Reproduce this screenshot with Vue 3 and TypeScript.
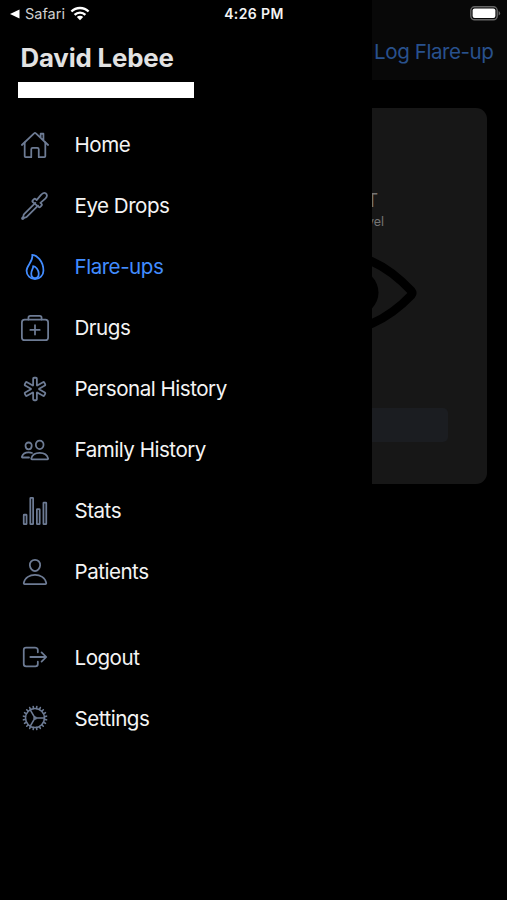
<script setup lang="ts">
interface MenuItem {
  label: string
  icon: string
  paths: string[]
  active?: boolean
}

const TEETH = 20
const gearTeeth = Array.from({ length: TEETH }, (_, i) => {
  const a = ((i + 0.5) * Math.PI * 2) / TEETH
  const point = (r: number) =>
    `${(256 + r * Math.cos(a)).toFixed(1)} ${(256 + r * Math.sin(a)).toFixed(1)}`
  return `M${point(166)}L${point(200)}`
}).join('')

const mainItems: MenuItem[] = [
  {
    label: 'Home',
    icon: 'home',
    paths: [
      'M80 212v236a16 16 0 0016 16h96V328a24 24 0 0124-24h80a24 24 0 0124 24v136h96a16 16 0 0016-16V212',
      'M480 256L266.89 52c-5-5.28-16.69-5.34-21.78 0L32 256M400 179V64h-48v69',
    ],
  },
  {
    label: 'Eye Drops',
    icon: 'dropper',
    paths: [
      'M262.5 204.2L70 396.7c-12.6 12.6-6.8 19.4-13 35.7-6.4 17-23.6 24.6-23.6 31.9 0 5.6 9.1 14.5 14.6 14.5 7.1 0 14.7-16.8 32-24.2 16.7-7.1 23-2 34.6-13.6L307.8 248.5',
      'M218 160l21-21c8-8 20-8 28 0l17 17 71-86c28-34 57-48 82-31 35 24 26 63-5 90l-84 73 19 19c8 8 8 20 0 28l-21 21c-8 8-20 8-28 0L218 188c-8-8-8-20 0-28z',
    ],
  },
  {
    label: 'Flare-ups',
    icon: 'flame',
    active: true,
    paths: [
      'M112 320c0-93 124-165 96-272 66 0 192 96 192 272a144 144 0 01-288 0z',
      'M320 368c0 57.71-32 80-64 80s-64-22.29-64-80 40-86 32-128c42 0 96 70.29 96 128z',
    ],
  },
  {
    label: 'Drugs',
    icon: 'medkit',
    paths: [
      'M80 112h352a48 48 0 0148 48v256a48 48 0 01-48 48H80a48 48 0 01-48-48V160a48 48 0 0148-48z',
      'M144 112V80a32 32 0 0132-32h160a32 32 0 0132 32v32M256 208v160M336 288H176',
    ],
  },
  {
    label: 'Personal History',
    icon: 'medical',
    paths: [
      'M429.93 174.27l-16.47-28.59a15.49 15.49 0 00-21.15-5.7l-98.39 57a4 4 0 01-6-3.5L288 80a16 16 0 00-16-16h-32a16 16 0 00-16 16l.07 113.57a4 4 0 01-6 3.5l-98.39-57a15.49 15.49 0 00-21.15 5.7l-16.46 28.5a15.42 15.42 0 005.69 21.1l98.49 57.08a4 4 0 010 6.9l-98.49 57.08a15.54 15.54 0 00-5.69 21.15l16.47 28.59a15.49 15.49 0 0021.15 5.7l98.39-57a4 4 0 016 3.5L224 432a16 16 0 0016 16h32a16 16 0 0016-16l-.07-113.57a4 4 0 016-3.5l98.39 57a15.49 15.49 0 0021.15-5.7l16.47-28.59a15.42 15.42 0 00-5.69-21.1l-98.49-57.08a4 4 0 010-6.9l98.49-57.08a15.51 15.51 0 005.68-21.21z',
    ],
  },
  {
    label: 'Family History',
    icon: 'people',
    paths: [
      'M402 168c-2.93 40.67-33.1 72-66 72s-63.12-31.32-66-72c-3-42.31 26.37-72 66-72s69 30.46 66 72z',
      'M336 304c-65.17 0-127.84 32.37-143.54 95.41-2.08 8.34 3.15 16.59 11.72 16.59h263.65c8.57 0 13.77-8.25 11.72-16.59C463.85 335.36 401.18 304 336 304z',
      'M200 185.94c-2.34 32.48-26.72 58.06-53 58.06s-50.7-25.57-53-58.06C91.61 152.15 115.34 128 147 128s55.39 24.77 53 57.94z',
      'M206 306c-18.05-8.27-37.93-11.45-59-11.45-52 0-102.1 25.85-114.65 76.2-1.65 6.66 2.53 13.25 9.37 13.25H154',
    ],
  },
  {
    label: 'Stats',
    icon: 'stats',
    paths: [
      'M72 320h32a8 8 0 018 8v144a8 8 0 01-8 8H72a8 8 0 01-8-8V328a8 8 0 018-8z',
      'M184 32h32a8 8 0 018 8v432a8 8 0 01-8 8h-32a8 8 0 01-8-8V40a8 8 0 018-8z',
      'M296 224h32a8 8 0 018 8v240a8 8 0 01-8 8h-32a8 8 0 01-8-8V232a8 8 0 018-8z',
      'M408 112h32a8 8 0 018 8v352a8 8 0 01-8 8h-32a8 8 0 01-8-8V120a8 8 0 018-8z',
    ],
  },
  {
    label: 'Patients',
    icon: 'person',
    paths: [
      'M344 144c-3.92 52.87-44 96-88 96s-84.15-43.12-88-96c-4-55 35-96 88-96s92 42 88 96z',
      'M256 304c-87 0-175.3 48-191.64 138.6C62.39 453.52 68.57 464 80 464h352c11.44 0 17.62-10.48 15.65-21.4C431.3 352 343 304 256 304z',
    ],
  },
]

const accountItems: MenuItem[] = [
  {
    label: 'Logout',
    icon: 'logout',
    paths: [
      'M304 336v40a40 40 0 01-40 40H104a40 40 0 01-40-40V136a40 40 0 0140-40h152c22.09 0 48 17.91 48 40v40M368 336l80-80-80-80M176 256h256',
    ],
  },
  {
    label: 'Settings',
    icon: 'settings',
    paths: [
      'M418 256a162 162 0 11-324 0 162 162 0 01324 0z',
      'M274 256a18 18 0 11-36 0 18 18 0 0136 0zM274 256h144M247 240L175 116M247 272L175 396',
      gearTeeth,
    ],
  },
]

const groups: MenuItem[][] = [mainItems, accountItems]
</script>

<template>
  <div class="screen">
    <div class="page">
      <header class="toolbar">
        <span class="action">Log Flare-up</span>
      </header>
      <main class="content">
        <section class="card">
          <div class="side">T</div>
          <div class="level">vel</div>
          <svg class="eye" viewBox="0 0 160 80" fill="none" stroke="#000" stroke-width="8.5" stroke-linejoin="round">
            <path d="M6 38C24 17 52 2 80 2c12 0 24 2 35 6.500C130 15 144 27 154.500 38q1.500 2 0 4C144 53 130 64 115 70.500 104 75 92 77 80 77 52 77 24 63 6 42q-1.500-2 0-4z" />
            <circle cx="99" cy="39.500" r="22.500" fill="#000" stroke="none" />
          </svg>
          <div class="button"></div>
        </section>
      </main>
    </div>

    <aside class="menu">
      <div class="profile">
        <h1>David Lebee</h1>
        <div class="redacted"></div>
      </div>
      <nav>
        <ul v-for="(group, g) in groups" :key="g">
          <li v-for="item in group" :key="item.label" :class="{ active: item.active }">
            <svg :class="['icon', item.icon]" viewBox="0 0 512 512">
              <path v-for="(d, i) in item.paths" :key="i" :d="d" />
            </svg>
            <span>{{ item.label }}</span>
          </li>
        </ul>
      </nav>
    </aside>

    <div class="status">
      <div class="back">
        <svg width="10" height="10" viewBox="0 0 10 10"><path d="M0 5L9.5.6v8.8z" fill="#fff" /></svg>
        <span>Safari</span>
        <svg class="wifi" width="20" height="15" viewBox="0 0 20 15" fill="none" stroke="#fff" stroke-width="2.4">
          <path d="M1.4 5.5a12.2 12.2 0 0117.2 0M4.6 8.8a7.7 7.7 0 0110.8 0" />
          <path d="M6.8 11.1a4.5 4.5 0 016.4 0L10 14.3z" fill="#fff" stroke="none" />
        </svg>
      </div>
      <div class="time">4:26 PM</div>
      <svg class="battery" width="31" height="15" viewBox="0 0 31 15">
        <rect x=".8" y=".8" width="26.4" height="13" rx="3.8" fill="none" stroke="#666" stroke-width="1.4" />
        <rect x="2.6" y="2.6" width="22.8" height="9.4" rx="2" fill="#fff" />
        <path d="M28.6 5a2.5 2.5 0 010 4.6z" fill="#666" />
      </svg>
    </div>
  </div>
</template>

<style>
body {
  background: #000;
}
</style>

<style scoped>
.screen {
  position: relative;
  height: 900px;
  overflow: hidden;
  background: #000;
  color: #f4f4f4;
  font-family: Inter, 'Liberation Sans', sans-serif;
}
.page {
  height: 100%;
}
.toolbar {
  box-sizing: border-box;
  height: 80px;
  padding: 36px 13.5px 0 0;
  background: #080808;
  text-align: right;
}
.action {
  color: #28518d;
  font-size: 20.6px;
  line-height: 32px;
  letter-spacing: -0.45px;
}
.content {
  padding: 28px 20px;
}
.card {
  box-sizing: border-box;
  height: 376px;
  padding: 81px 39px 0;
  display: flex;
  flex-direction: column;
  align-items: flex-end;
  border-radius: 11px;
  background: #171717;
  color: #747474;
}
.side {
  margin-right: 70px;
  font-size: 18px;
  line-height: 24px;
}
.level {
  margin-right: 64px;
  font-size: 12.5px;
  line-height: 18px;
}
.eye {
  width: 160px;
  height: 80px;
  margin: 22px 31px 0 0;
}
.button {
  width: 350px;
  height: 34px;
  margin-top: 75px;
  border-radius: 5px;
  background: #1b1d21;
}
.menu {
  position: absolute;
  top: 0;
  bottom: 0;
  left: 0;
  width: 372px;
  box-sizing: border-box;
  padding-top: 40px;
  background: #000;
}
.profile {
  height: 74px;
  padding-left: 18px;
}
h1 {
  margin: 0 0 0 2.5px;
  color: #e2e2e2;
  font-size: 25.8px;
  font-weight: 700;
  line-height: 35px;
  letter-spacing: -0.15px;
}
.redacted {
  width: 176px;
  height: 16px;
  margin-top: 7px;
  background: #fff;
}
ul {
  margin: 0 0 24.5px;
  padding: 0 0 0 20px;
  list-style: none;
}
li {
  height: 61px;
  display: flex;
  align-items: center;
  gap: 24.5px;
  font-size: 20.6px;
  letter-spacing: -0.5px;
}
.icon {
  width: 30px;
  height: 30px;
  fill: none;
  stroke: #6d7b94;
  stroke-width: 30;
  stroke-linecap: round;
  stroke-linejoin: round;
}
.settings {
  stroke-width: 27;
}
.active {
  color: #428cff;
}
.active .icon {
  stroke: #428cff;
}
.status {
  position: absolute;
  top: 0;
  left: 0;
  width: 100%;
  height: 27px;
  box-sizing: border-box;
  padding: 0 6px 0 10px;
  display: grid;
  grid-template-columns: 1fr auto 1fr;
  align-items: center;
}
.back {
  display: flex;
  align-items: center;
  gap: 5px;
  color: #cfcfcf;
  font-size: 14.5px;
}
.time {
  margin-left: -3px;
  font-size: 14px;
  font-weight: 600;
  letter-spacing: 0.4px;
}
.battery {
  justify-self: end;
}
</style>
